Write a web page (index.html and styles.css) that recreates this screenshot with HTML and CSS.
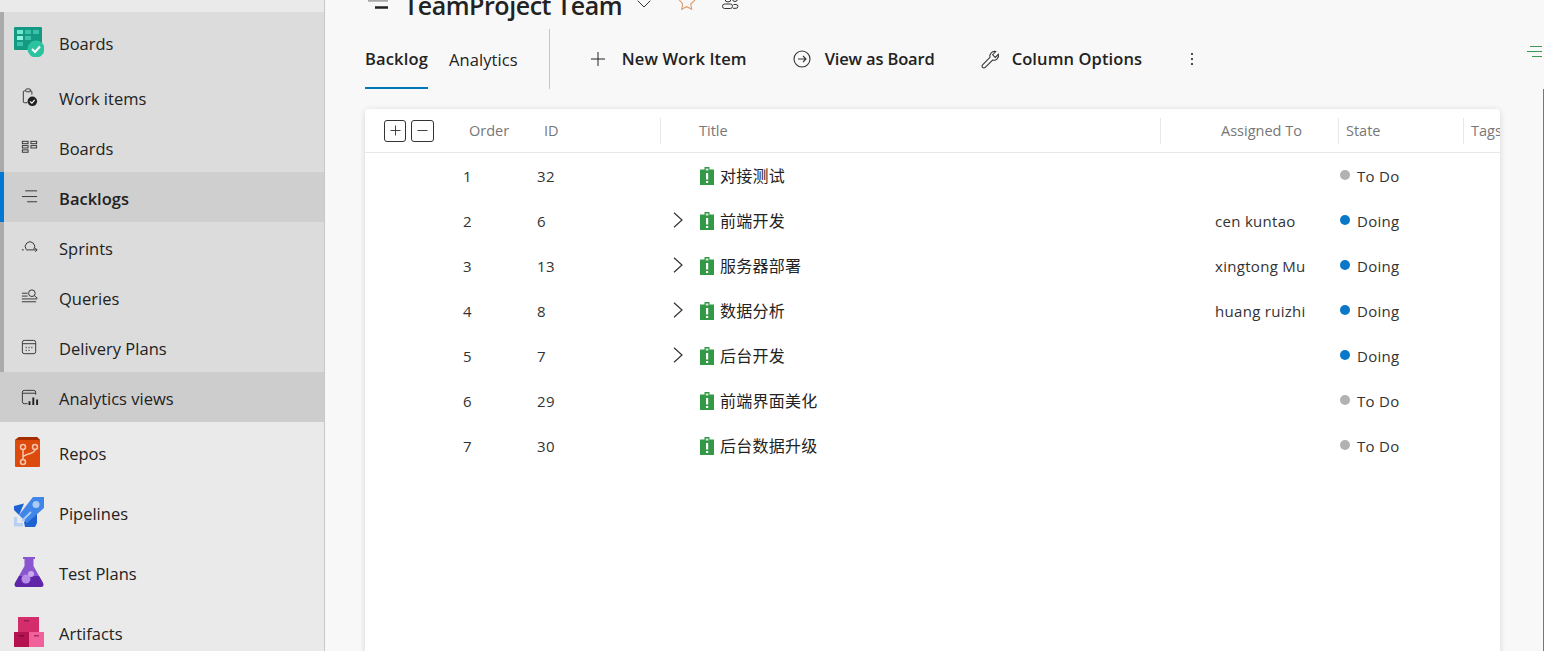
FILE: index.html
```
<!DOCTYPE html>
<html lang="en">
<head>
<meta charset="utf-8">
<title>TeamProject Team Backlog</title>
<link rel="stylesheet" href="styles.css">
</head>
<body>
<div class="app">
  <nav class="sidebar">
    <div class="top-gap"></div>
    <div class="group">
      <a class="hub hub-open"><svg class="hub-icon" viewBox="0 0 30 30"><rect x="0" y="0" width="28" height="23" rx="1" fill="#149a82"/><rect x="3" y="3" width="6" height="4" fill="#6fe8cf"/><rect x="11" y="3" width="6" height="4" fill="#3ac3aa"/><rect x="19" y="3" width="6" height="4" fill="#3ac3aa"/><rect x="3" y="9" width="6" height="4" fill="#8ff3de"/><rect x="11" y="9" width="6" height="4" fill="#3ac3aa"/><rect x="3" y="15" width="6" height="4" fill="#3ac3aa"/><circle cx="22" cy="22" r="8.500" fill="#2dc2a0"/><path d="M18 22l3 3 5-5.500" fill="none" stroke="#fff" stroke-width="2"/></svg><span>Boards</span></a>
      <a class="item"><svg class="item-icon" viewBox="0 0 20 20" fill="none" stroke="#333" stroke-width="1"><path d="M8 15.500H4.500a1 1 0 0 1-1-1V4a1 1 0 0 1 1-1H6M10 3h1.500a1 1 0 0 1 1 1v3"/><rect x="6" y="1" width="5" height="3" rx="1"/><circle cx="13" cy="14" r="5" fill="#222" stroke="none"/><path d="M10.500 14l2 2 3-3.500" stroke="#fff" stroke-width="1.200"/></svg><span>Work items</span></a>
      <a class="item"><svg class="item-icon" viewBox="0 0 20 20" fill="none" stroke="#333" stroke-width="1"><rect x="2.500" y="3.500" width="6" height="2.500"/><rect x="2.500" y="8" width="6" height="2.500"/><rect x="2.500" y="12.500" width="6" height="2.500"/><rect x="11.500" y="3.500" width="6" height="2.500"/><rect x="11.500" y="8" width="6" height="2.500"/></svg><span>Boards</span></a>
      <a class="item item-selected"><svg class="item-icon" viewBox="0 0 20 20" fill="none" stroke="#333" stroke-width="1"><path d="M5.500 3h12.500M2 9h16M7.500 14.500h10.500"/></svg><span class="strong">Backlogs</span></a>
      <a class="item"><svg class="item-icon" viewBox="0 0 20 20" fill="none" stroke="#333" stroke-width="1"><path d="M2 12.500h2M6.500 12a5 5 0 1 1 8 0M6.500 12.500H18M16 10.500l2 2-2 2"/></svg><span>Sprints</span></a>
      <a class="item"><svg class="item-icon" viewBox="0 0 20 20" fill="none" stroke="#333" stroke-width="1"><path d="M2 5.500h6M2 8.500h6M2 11.500h16M2 14.500h15"/><circle cx="12.500" cy="5.500" r="3.500"/><path d="M15 8l3.500 3"/></svg><span>Queries</span></a>
      <a class="item"><svg class="item-icon" viewBox="0 0 20 20" fill="none" stroke="#333" stroke-width="1"><rect x="2.500" y="2.500" width="14" height="14" rx="2"/><path d="M2.500 6h14"/><path d="M6 10h1M9 10h1M12 10h1M6 13h1M9 13h1" stroke-width="1.500"/></svg><span>Delivery Plans</span></a>
      <a class="item item-hover"><svg class="item-icon" viewBox="0 0 20 20" fill="none" stroke="#333" stroke-width="1"><path d="M8 16.500H4.500a2 2 0 0 1-2-2V4.500a2 2 0 0 1 2-2h10a2 2 0 0 1 2 2V7M2.500 5.500h14"/><path d="M9 14h2v4H9zM13 10h2v8h-2zM17 12h2v6h-2z" fill="#222" stroke="none"/></svg><span>Analytics views</span></a>
    </div>
    <a class="hub"><svg class="hub-icon" viewBox="0 0 30 30"><path d="M5 0h18l3 3v26a1 1 0 0 1-1 1H2a1 1 0 0 1-1-1V3z" fill="#dc4a0c"/><path d="M5 0h18l3 3H1z" fill="#a52c00"/><g fill="none" stroke="#f6c5ae" stroke-width="1.500"><circle cx="9" cy="10" r="2.500"/><circle cx="21" cy="10" r="2.500"/><circle cx="9" cy="25" r="2.500"/><path d="M9 12.500v10M21 12.500c0 5-12 4-12 8"/></g></svg><span>Repos</span></a>
    <a class="hub"><svg class="hub-icon" viewBox="0 0 30 30"><path d="M0 9l10-2.500L5 18l-5-5z" fill="#1c62d0"/><path d="M23 13v13l-2 4H11l-1-5z" fill="#1c62d0"/><path d="M19 0h11v11L13 26l-8-8z" fill="#3f86e8"/><path d="M8 24l9-9" stroke="#a9cbf5" stroke-width="2"/><circle cx="22" cy="7.500" r="3.500" fill="#a9cbf5"/><path d="M0 20h3v6h6v3.500H0z" fill="#b7cff3"/></svg><span>Pipelines</span></a>
    <a class="hub"><svg class="hub-icon" viewBox="0 0 30 30"><path d="M9 0h12v2h-1.500v7L29 26c1 2 0 4-2 4H3c-2 0-3-2-2-4l9.500-17V2H9z" fill="#8a56cf"/><path d="M5 19h20l4 7c1 2 0 4-2 4H3c-2 0-3-2-2-4z" fill="#5f27a8"/><circle cx="12" cy="22" r="4.500" fill="#b58be6"/><circle cx="17" cy="17" r="3" fill="#c8a8ef"/></svg><span>Test Plans</span></a>
    <a class="hub"><svg class="hub-icon" viewBox="0 0 30 30"><rect x="4" y="0" width="21" height="15" fill="#d42d6c"/><rect x="10" y="3" width="5" height="1.500" fill="#9c1b4e"/><rect x="0" y="15" width="15" height="15" fill="#b5134f"/><rect x="15" y="15" width="15" height="15" fill="#f0609b"/><rect x="5" y="18" width="5" height="1.500" fill="#7d0e39"/><rect x="20" y="18" width="5" height="1.500" fill="#a82a61"/></svg><span>Artifacts</span></a>
  </nav>
  <main class="main">
    <header class="title-row">
      <svg class="title-menu" viewBox="0 0 24 14" fill="none" stroke-width="2.500"><path d="M1 0.500h20" stroke="#a8a8a8"/><path d="M8 7.500h13" stroke="#222"/></svg>
      <h1 class="title">TeamProject Team</h1>
      <svg class="title-chevron" viewBox="0 0 14 8" fill="none" stroke="#333"><path d="M.7 .7L7 7l6.300-6.300"/></svg>
      <svg class="title-star" viewBox="0 0 20 14" fill="none" stroke="#dd9a68" stroke-width="1.100"><path d="M2.300 0l3.400 4-1 5.300 5-2.600 5 2.600-1-5.300L18 0"/></svg>
      <svg class="title-team" viewBox="0 0 18 14" fill="none" stroke="#333"><circle cx="6" cy="-1" r="3"/><circle cx="13" cy="-1" r="2.500"/><rect x=".5" y="4" width="10" height="4.500" rx="2.200"/><path d="M11.500 4.500h2.500a1.800 1.800 0 0 1 0 3.800h-3"/></svg>
    </header>
    <div class="toolbar">
      <div class="tabs">
        <a class="tab tab-active">Backlog</a>
        <a class="tab">Analytics</a>
      </div>
      <div class="tool-sep"></div>
      <a class="tool tool-new"><svg class="tool-icon" viewBox="0 0 16 16" fill="none" stroke="#222"><path d="M8 1v14M1 8h14"/></svg><span>New Work Item</span></a>
      <a class="tool tool-view"><svg class="tool-icon" viewBox="0 0 18 18" fill="none" stroke="#333" stroke-width="1.100"><circle cx="9" cy="9" r="8"/><path d="M5 9h8M10 6l3 3-3 3"/></svg><span>View as Board</span></a>
      <a class="tool tool-col"><svg class="tool-icon tool-icon-lg" viewBox="0 0 18 18" fill="none" stroke="#333"><path d="M16.500 4l-3 3-2.500-2.500 3-3a4.500 4.500 0 0 0-5.500 5.500L1.500 14a1.600 1.600 0 0 0 2.500 2.500l7-7a4.500 4.500 0 0 0 5.500-5.500z"/></svg><span>Column Options</span></a>
      <svg class="more" viewBox="0 0 4 14" fill="#222"><circle cx="2" cy="2" r="1.100"/><circle cx="2" cy="7" r="1.100"/><circle cx="2" cy="12" r="1.100"/></svg>
      <svg class="filter" viewBox="0 0 15 11" fill="none" stroke="#3a9a4c"><path d="M3 .5h12M0 5.500h15M5 10.500h10"/></svg>
    </div>
    <div class="content">
      <section class="card">
        <div class="head">
          <div class="expanders"><span class="sq"><svg viewBox="0 0 12 12" fill="none" stroke="#333"><path d="M6 .5v11M.5 6h11"/></svg></span><span class="sq sq-wide"><svg viewBox="0 0 12 12" fill="none" stroke="#333"><path d="M.5 6h11"/></svg></span></div>
          <div>Order</div>
          <div>ID</div>
          <div class="h-col h-title">Title</div>
          <div class="h-col h-assigned">Assigned To</div>
          <div class="h-col">State</div>
          <div class="h-col">Tags</div>
        </div>
        <div class="rows">
          <div class="row"><span>1</span><span>32</span><span></span><span class="wi"><svg class="wi-icon"><use href="#wi"/></svg>对接测试</span><span></span><span class="st"><i class="dot todo"></i>To Do</span></div>
          <div class="row"><span>2</span><span>6</span><svg class="chev" viewBox="0 0 10 16" fill="none" stroke="#333" stroke-width="1.200"><path d="M1 .7L9 8l-8 7.300"/></svg><span class="wi"><svg class="wi-icon"><use href="#wi"/></svg>前端开发</span><span>cen kuntao</span><span class="st"><i class="dot doing"></i>Doing</span></div>
          <div class="row"><span>3</span><span>13</span><svg class="chev" viewBox="0 0 10 16" fill="none" stroke="#333" stroke-width="1.200"><path d="M1 .7L9 8l-8 7.300"/></svg><span class="wi"><svg class="wi-icon"><use href="#wi"/></svg>服务器部署</span><span>xingtong Mu</span><span class="st"><i class="dot doing"></i>Doing</span></div>
          <div class="row"><span>4</span><span>8</span><svg class="chev" viewBox="0 0 10 16" fill="none" stroke="#333" stroke-width="1.200"><path d="M1 .7L9 8l-8 7.300"/></svg><span class="wi"><svg class="wi-icon"><use href="#wi"/></svg>数据分析</span><span>huang ruizhi</span><span class="st"><i class="dot doing"></i>Doing</span></div>
          <div class="row"><span>5</span><span>7</span><svg class="chev" viewBox="0 0 10 16" fill="none" stroke="#333" stroke-width="1.200"><path d="M1 .7L9 8l-8 7.300"/></svg><span class="wi"><svg class="wi-icon"><use href="#wi"/></svg>后台开发</span><span></span><span class="st"><i class="dot doing"></i>Doing</span></div>
          <div class="row"><span>6</span><span>29</span><span></span><span class="wi"><svg class="wi-icon"><use href="#wi"/></svg>前端界面美化</span><span></span><span class="st"><i class="dot todo"></i>To Do</span></div>
          <div class="row"><span>7</span><span>30</span><span></span><span class="wi"><svg class="wi-icon"><use href="#wi"/></svg>后台数据升级</span><span></span><span class="st"><i class="dot todo"></i>To Do</span></div>
        </div>
      </section>
    </div>
  </main>
</div>
<svg class="defs" aria-hidden="true"><symbol id="wi" viewBox="0 0 14 18"><path d="M4.500 0h5v2.500H14V18H0V2.500h4.500z" fill="#339947"/><path d="M6 6h2.200v6.500H6zM6 14h2.200v2H6z" fill="#fff"/><path d="M5.800 1.500h2.600v2H5.800z" fill="#d7efdc"/></symbol></svg>
</body>
</html>
```
FILE: styles.css
```
* { box-sizing: border-box; }
html, body { margin: 0; height: 100%; overflow: hidden; }
body { font-family: "Open Sans", "Noto Sans CJK SC", sans-serif; font-size: 16.5px; color: #222; }
a { color: inherit; text-decoration: none; }
.defs { display: none; }
.app { display: flex; height: 651px; overflow: hidden; }

.sidebar { flex: 0 0 325px; background: #eaeaea; border-right: 1px solid #c8c8c8; overflow: hidden; }
.sidebar span { margin-top: 2px; }
.top-gap { height: 12px; }
.group { background: #dcdcdc; border-left: 4px solid #aaa; }
.hub { display: flex; align-items: center; height: 60px; padding-left: 14px; gap: 15px; color: #222; }
.hub-open { margin-left: -4px; }
.hub-icon { width: 30px; height: 30px; flex: none; }
.item { display: flex; align-items: center; height: 50px; padding-left: 16px; gap: 20px; }
.item-icon { width: 19px; height: 19px; flex: none; }
.item-selected { background: #cfcfcf; border-left: 4px solid #0078d4; margin-left: -4px; padding-left: 16px; }
.item-hover { background: #cdcdcd; margin-left: -4px; padding-left: 20px; }
.strong { font-weight: 600; }

.main { flex: 1; min-width: 0; background: #f8f8f8; display: flex; flex-direction: column; }
.title-row { height: 14px; display: flex; align-items: flex-start; padding-left: 42px; }
.title-menu { width: 24px; height: 14px; flex: none; }
.title { margin: -12px 0 0 13px; font-size: 25px; line-height: 34px; font-weight: 600; color: #222; letter-spacing: -0.45px; white-space: nowrap; }
.title-chevron { width: 14px; height: 8px; flex: none; margin-left: 15px; }
.title-star { width: 20px; height: 14px; flex: none; margin-left: 26px; }
.title-team { width: 18px; height: 14px; flex: none; margin-left: 25px; }

.toolbar { height: 75px; margin-left: 40px; display: flex; align-items: center; position: relative; padding-top: 15px; }
.tabs { display: flex; gap: 21px; align-self: stretch; }
.tab { display: flex; align-items: center; height: 60px; letter-spacing: .1px; }
.tab-active { font-weight: 600; letter-spacing: .15px; border-bottom: 2px solid #0078b8; }
.tool-sep { width: 1px; height: 60px; background: #c6c6c6; margin-left: 31px; }
.tool { display: flex; align-items: center; font-weight: 600; letter-spacing: .1px; color: #222; white-space: nowrap; }
.tool span { margin-bottom: 2px; }
.tool-new { margin-left: 40px; gap: 16px; }
.tool-view { margin-left: 46px; gap: 14px; letter-spacing: -.15px; }
.tool-col { margin-left: 46px; gap: 12px; }
.tool-icon { width: 16px; height: 16px; flex: none; }
.tool-view .tool-icon { width: 18px; height: 18px; }
.tool-icon-lg { width: 19px; height: 19px; }
.more { width: 4px; height: 14px; margin-left: 48px; flex: none; }
.filter { position: absolute; right: 2px; top: 32px; width: 15px; height: 11px; }

.content { flex: 1; padding: 20px 0 0 40px; min-height: 0; border-right: 1px solid #777; }
.card { background: #fff; border-radius: 4px 4px 0 0; box-shadow: 0 1px 6px rgba(0,0,0,.14); height: 560px; overflow: hidden; width: 1135px; }
.head { height: 44px; border-bottom: 1px solid #e8e8e8; display: grid; grid-template-columns: 104px 75px 116px 500px 178px 125px 37px; align-items: center; font-size: 14.500px; color: #777; white-space: nowrap; }
.expanders { display: flex; gap: 5px; padding-left: 19px; }
.sq { width: 22px; height: 22px; border: 1px solid #333; border-radius: 3px; display: flex; align-items: center; justify-content: center; }
.sq-wide { width: 23px; }
.sq svg { width: 11px; height: 11px; }
.h-col { height: 26px; line-height: 26px; border-left: 1px solid #e8e8e8; padding-left: 7px; }
.h-title { padding-left: 38px; }
.h-assigned { padding-left: 60px; }
.row { height: 45px; padding-left: 98px; display: grid; grid-template-columns: 74px 136px 27px 515px 125px 160px; align-items: center; font-size: 15px; letter-spacing: .3px; color: #333; white-space: nowrap; }
.wi { display: flex; align-items: center; gap: 6px; padding-bottom: 2px; font-size: 16px; letter-spacing: .25px; color: #222; }
.wi-icon { width: 14px; height: 18px; flex: none; margin-bottom: -2px; }
.chev { width: 10px; height: 16px; margin-top: -2px; }
.st { display: flex; align-items: center; gap: 7px; color: #333; }
.dot { width: 10px; height: 10px; border-radius: 50%; margin-top: -2px; flex: none; }
.todo { background: #b2b2b2; }
.doing { background: #0a78c8; }
```
